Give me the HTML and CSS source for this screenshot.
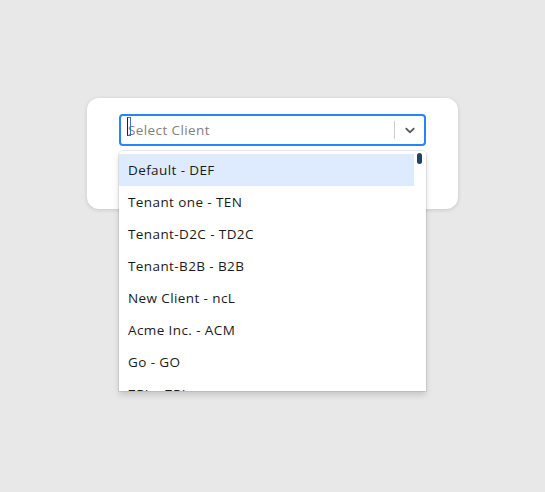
FILE: index.html
```html
<!DOCTYPE html>
<html>
<head>
<meta charset="utf-8">
<link rel="stylesheet" href="styles.css">
</head>
<body>
<div class="card">
  <div class="select">
    <div class="control">
      <div class="value"><span class="caret"></span><span class="placeholder">Select Client</span></div>
      <span class="sep"></span>
      <span class="indicator">
        <svg width="20" height="20" viewBox="0 0 20 20"><path d="M4.516 7.548c0.436-0.446 1.043-0.481 1.576 0l3.908 3.747 3.908-3.747c0.533-0.481 1.141-0.446 1.574 0 0.436 0.445 0.408 1.197 0 1.615-0.406 0.418-4.695 4.502-4.695 4.502-0.217 0.223-0.502 0.335-0.787 0.335s-0.57-0.112-0.789-0.335c0 0-4.287-4.084-4.695-4.502s-0.436-1.170 0-1.615z" fill="#555"/></svg>
      </span>
    </div>
    <div class="menu">
      <div class="list">
        <div class="opt active">Default - DEF</div>
        <div class="opt">Tenant one - TEN</div>
        <div class="opt">Tenant-D2C - TD2C</div>
        <div class="opt">Tenant-B2B - B2B</div>
        <div class="opt">New Client - ncL</div>
        <div class="opt">Acme Inc. - ACM</div>
        <div class="opt">Go - GO</div>
        <div class="opt">ZRL - ZRL</div>
      </div>
      <span class="thumb"></span>
    </div>
  </div>
</div>
</body>
</html>
```

FILE: styles.css
```css
html, body {
  margin: 0;
  padding: 0;
  background: #e8e8e8;
  font-family: "Open Sans", "Noto Sans", sans-serif;
}
body {
  height: 492px;
  overflow: hidden;
}
.card {
  box-sizing: border-box;
  width: 371px;
  margin: 98px auto 0;
  background: #fff;
  border-radius: 12px;
  padding: 16px 32px 63px;
  box-shadow: 0 1px 4px rgba(0,0,0,0.14);
}
.select {
  position: relative;
}
.control {
  box-sizing: border-box;
  height: 32px;
  border: 2px solid #2684ff;
  border-radius: 4px;
  display: flex;
  align-items: center;
  padding-left: 6px;
}
.value {
  flex: 1;
  position: relative;
  display: flex;
  align-items: center;
}
.caret {
  position: absolute;
  left: 0;
  top: -4px;
  width: 2px;
  height: 17px;
  border: 1px solid #3b6fd6;
  border-left: 1px solid #222;
}
.placeholder {
  font-size: 13.5px;
  letter-spacing: 0.4px;
  color: #808080;
  margin-left: 1px;
}
.sep {
  width: 1px;
  height: 18px;
  background: #ccc;
}
.indicator {
  width: 29px;
  display: flex;
  justify-content: center;
  align-items: center;
}
.indicator svg {
  width: 16px;
  height: 16px;
}
.menu {
  position: absolute;
  left: 0;
  right: 0;
  top: 37px;
  height: 240px;
  background: #fff;
  border-radius: 4px 4px 0 0;
  box-shadow: 0 0 0 1px rgba(0,0,0,0.08), 0 4px 6px rgba(0,0,0,0.15);
  overflow: hidden;
  padding-top: 3px;
  box-sizing: border-box;
}
.list {
  width: 295px;
}
.opt {
  height: 32px;
  line-height: 32px;
  padding-left: 9px;
  font-size: 13.5px;
  letter-spacing: 0.4px;
  color: #1a1a1a;
  white-space: nowrap;
}
.opt.active {
  background: #deebff;
}
.thumb {
  position: absolute;
  left: 298px;
  top: 2px;
  width: 5px;
  height: 11px;
  border-radius: 3px;
  background: #1f4266;
}
```
